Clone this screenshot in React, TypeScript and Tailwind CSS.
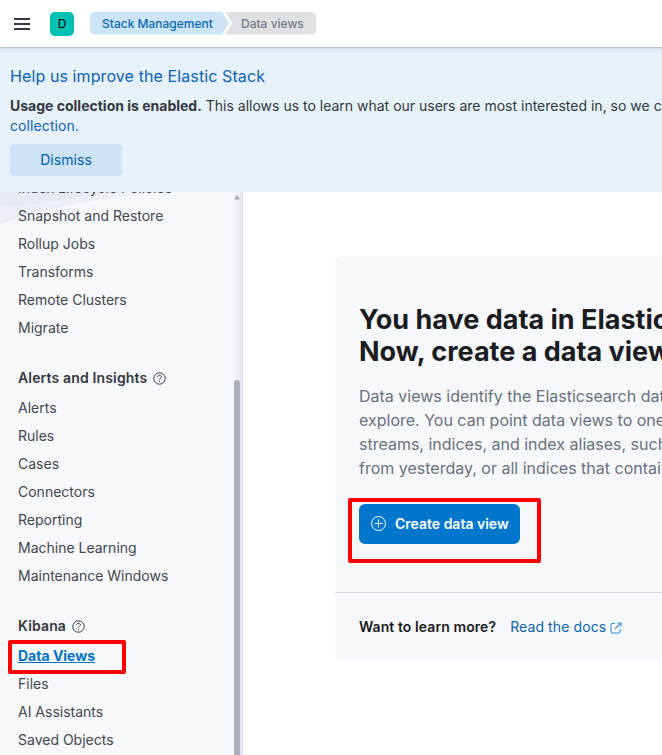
import React from "react";

const HelpIcon = () => (
  <svg width="13" height="13" viewBox="0 0 13 13" fill="none" stroke="#343741" className="mt-[3px] shrink-0">
    <circle cx="6.5" cy="6.5" r="5.7" strokeWidth="1" />
    <path d="M4.6 5.1c0-1.2.85-1.8 1.9-1.8s1.9.65 1.9 1.6c0 1.25-1.8 1.3-1.8 2.6" strokeWidth="1" />
    <circle cx="6.5" cy="9.4" r=".65" fill="#343741" stroke="none" />
  </svg>
);

const Item = ({ children }: { children: React.ReactNode }) => (
  <li className="flex h-7 items-center">{children}</li>
);

const SectionTitle = ({ children }: { children: React.ReactNode }) => (
  <h3 className="flex h-8 items-center gap-1.5 font-semibold tracking-[0.15px] text-[#343741]">
    {children}
    <HelpIcon />
  </h3>
);

const Header = () => (
  <header className="relative z-10 flex h-[47px] shrink-0 items-center bg-white pl-3.5 shadow-[0_1px_1px_rgba(105,112,125,0.3),0_2px_4px_rgba(105,112,125,0.15)]">
    <div className="flex w-4 flex-col gap-[3px]">
      <span className="h-0.5 bg-[#343741]" />
      <span className="h-0.5 bg-[#343741]" />
      <span className="h-0.5 bg-[#343741]" />
    </div>
    <div className="ml-5 flex size-6 items-center justify-center rounded-[5px] bg-[#00bfb3] text-[12px] text-black">
      D
    </div>
    <nav className="ml-4 flex h-6 text-[12px] leading-[23px] font-medium">
      <a className="h-[23px] w-[139px] rounded-l-[5px] bg-[#cce4f5] pl-3 text-[#0b69b0] [clip-path:polygon(0_0,132px_0,100%_50%,132px_100%,0_100%)]">
        Stack Management
      </a>
      <span className="-ml-1 h-[23px] w-[91px] rounded-r-[5px] bg-[#e0e0e3] pl-4 text-[#757b88] [clip-path:polygon(0_0,100%_0,100%_100%,0_100%,7px_50%)]">
        Data views
      </span>
    </nav>
  </header>
);

const Banner = () => (
  <section className="flex h-[145px] shrink-0 flex-col items-start bg-[#e6f1fa] px-2.5 pt-[17px]">
    <h2 className="text-[16px] leading-6 tracking-[0.1px] text-[#0a62b0]">Help us improve the Elastic Stack</h2>
    <p className="mt-2 text-[14px] leading-5 whitespace-nowrap text-[#343741]">
      <strong className="font-bold">Usage collection is enabled.</strong> This allows us to learn what our users are most
      interested in, so we can improve our products
      <br />
      <a className="tracking-[0.1px] text-[#0a62b0]">collection.</a>
    </p>
    <button className="mt-2 h-8 w-28 rounded-[4px] bg-[#cce4f5] pb-px text-[14px] tracking-[0.05px] text-[#0061a6]">
      Dismiss
    </button>
  </section>
);

const Sidebar = () => (
  <aside className="relative w-[243px] shrink-0 overflow-hidden border-r border-[#d9dde8] bg-[#f7f8fc] text-[14px] text-[#43464f]">
    <svg className="absolute top-0 left-0" width="200" height="34">
      <path d="M0 0H172Q80 5 0 32Z" fill="#edeff6" />
      <path d="M0 0H100Q50 12 0 15Z" fill="#e6eaf2" />
    </svg>
    <div className="relative -mt-[19px] pl-[18px]">
      <ul>
        <Item>Index Lifecycle Policies</Item>
        <Item>Snapshot and Restore</Item>
        <Item>Rollup Jobs</Item>
        <Item>Transforms</Item>
        <Item>Remote Clusters</Item>
        <Item>Migrate</Item>
      </ul>
      <div className="mt-5">
        <SectionTitle>Alerts and Insights</SectionTitle>
        <ul>
          <Item>Alerts</Item>
          <Item>Rules</Item>
          <Item>Cases</Item>
          <Item>Connectors</Item>
          <Item>Reporting</Item>
          <Item>Machine Learning</Item>
          <Item>Maintenance Windows</Item>
        </ul>
      </div>
      <div className="mt-5">
        <SectionTitle>Kibana</SectionTitle>
        <ul>
          <li className="relative flex h-7 items-center">
            <a className="font-bold text-[#0071c2] underline">Data Views</a>
            <span className="absolute -top-px -left-2.5 h-[34px] w-[118px] rounded-[2px] border-4 border-[#ff0000]" />
          </li>
          <Item>Files</Item>
          <Item>AI Assistants</Item>
          <Item>Saved Objects</Item>
        </ul>
      </div>
    </div>
    <div className="absolute inset-y-0 right-0 w-2.5 bg-linear-to-r from-transparent to-[#69707d]/12" />
    <svg className="absolute top-[3px] right-[2px]" width="6" height="5">
      <path d="M3 0L6 4.5H0Z" fill="#a3a7b0" />
    </svg>
    <div className="absolute top-[188px] right-[2px] bottom-0 w-1.5 rounded-t-full bg-[#abb0ba]" />
  </aside>
);

const PlusCircle = () => (
  <svg width="16" height="16" viewBox="0 0 16 16" fill="none" stroke="#fff">
    <circle cx="7.5" cy="7.5" r="7" />
    <path d="M7.5 3.5v8M3.5 7.5h8" />
  </svg>
);

const ExternalIcon = () => (
  <svg width="12" height="12" viewBox="0 0 12 12" fill="none" stroke="#3a8fcb" strokeWidth="1.1" className="mt-[3px]">
    <path d="M5 1.5H2.3Q1 1.5 1 2.8V9.8Q1 11 2.3 11H8.7Q10 11 10 9.8V7" />
    <path d="M7.2 1H11V4.8M10.8 1.2L5 7" />
  </svg>
);

const Prompt = () => (
  <section className="mt-16 ml-[92px] w-[700px] rounded-[6px] bg-[#f7f8fc]">
    <div className="flex h-[336px] flex-col items-start pt-12 pl-6">
      <h1 className="text-[27px] leading-8 font-bold whitespace-nowrap text-[#1a1c21]">
        You have data in Elasticsearch.
        <br />
        Now, create a data view.
      </h1>
      <p className="mt-4 text-[16px] leading-6 whitespace-nowrap text-[#69707d]">
        Data views identify the Elasticsearch data you want to
        <br />
        explore. You can point data views to one or more data
        <br />
        streams, indices, and index aliases, such as your log data
        <br />
        from yesterday, or all indices that contain your log data.
      </p>
      <div className="relative mt-6">
        <button className="flex h-10 w-[161px] items-center gap-2 rounded-[6px] bg-[#0077cc] pb-px pl-3 text-[14px] font-semibold whitespace-nowrap text-white">
          <PlusCircle />
          Create data view
        </button>
        <span className="absolute -top-1.5 -left-[11px] h-[65px] w-[193px] rounded-[2px] border-4 border-[#ff0000]" />
      </div>
    </div>
    <div className="flex h-[69px] items-center border-t border-[#d3dae6] pb-0.5 pl-6 text-[14px]">
      <strong className="font-semibold tracking-[0.08px] text-[#1a1c21]">Want to learn more?</strong>
      <a className="ml-3.5 flex items-center gap-1 tracking-[0.1px] text-[#0a62b0]">
        Read the docs
        <ExternalIcon />
      </a>
    </div>
  </section>
);

export default function App() {
  return (
    <div className="flex h-[755px] w-[662px] flex-col overflow-hidden bg-white font-[Inter,sans-serif]">
      <Header />
      <Banner />
      <div className="flex min-h-0 flex-1">
        <Sidebar />
        <main className="min-w-0 flex-1 overflow-hidden">
          <Prompt />
        </main>
      </div>
    </div>
  );
}
